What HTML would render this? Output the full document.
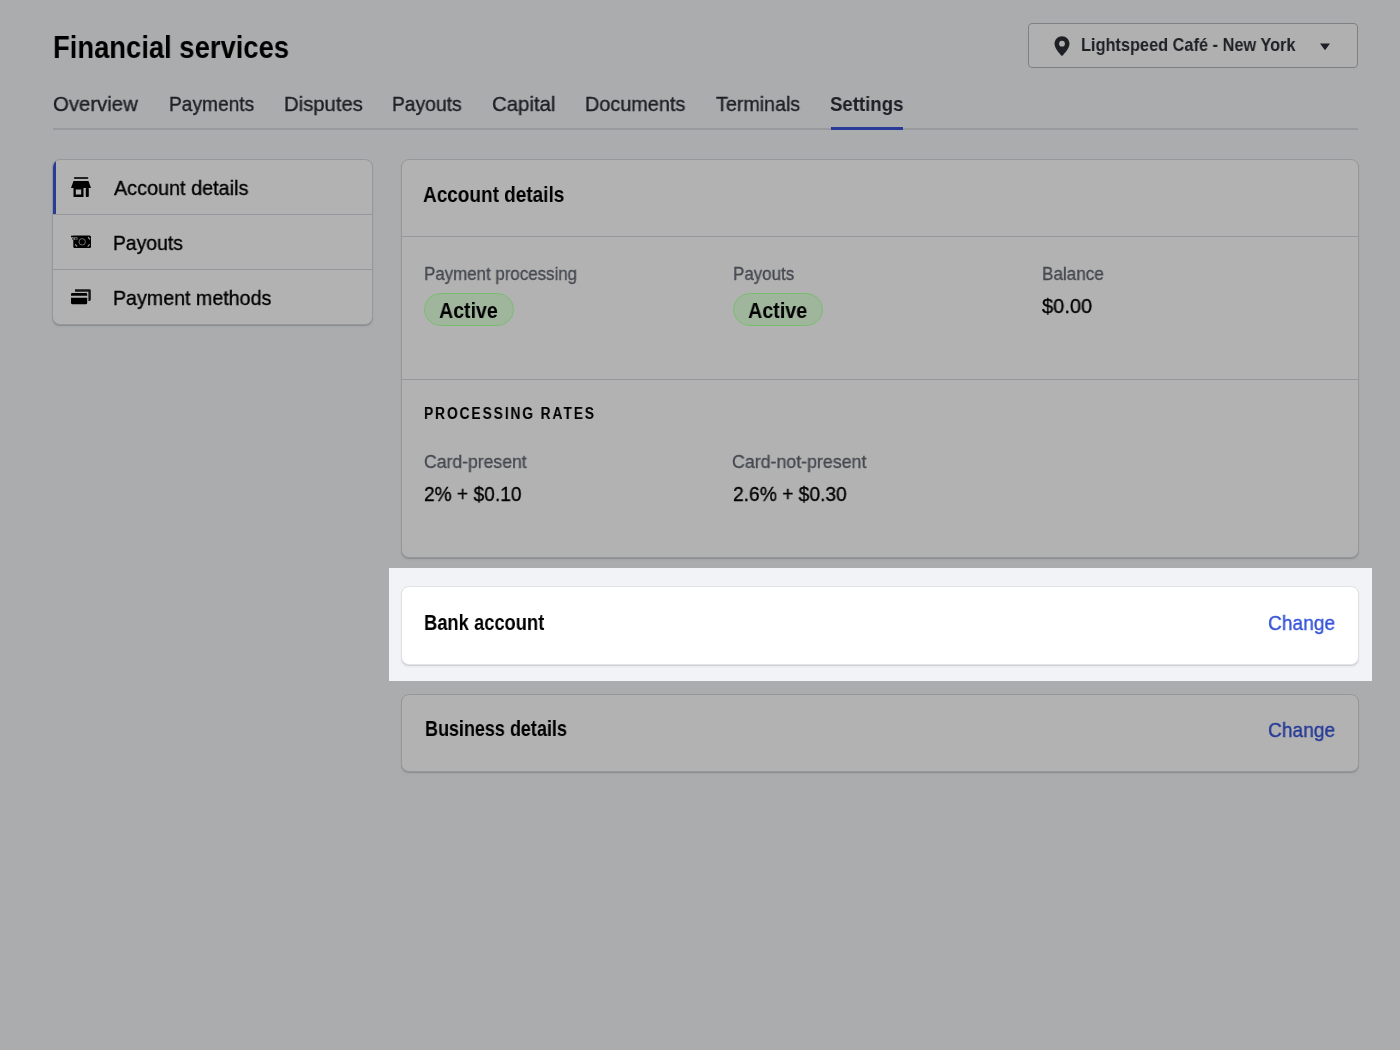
<!DOCTYPE html>
<html>
<head>
<meta charset="utf-8">
<style>
html,body{margin:0;padding:0;}
body{width:1400px;height:1050px;position:relative;overflow:hidden;background:#f5f6f8;font-family:"Liberation Sans",sans-serif;color:#000;}
.a{position:absolute;white-space:nowrap;line-height:1;will-change:transform;}
.h1{font-size:32px;font-weight:700;color:#000;}
.tab{font-size:20.8px;color:#2b2e36;-webkit-text-stroke:0.35px #2b2e36;}
.sel{font-weight:700;-webkit-text-stroke:0;}
.loc{font-size:19px;font-weight:700;color:#2b2e36;}
.val{font-size:20.8px;color:#000;-webkit-text-stroke:0.35px currentColor;}
.b20{font-size:22px;font-weight:700;color:#000;}
.lbl{font-size:18.6px;color:#636873;-webkit-text-stroke:0.3px #636873;}
.caps{font-size:16px;font-weight:700;color:#000;}
.act{font-size:22px;font-weight:700;color:#000;}
.blue{color:#3553d8;}
.card{position:absolute;background:#fff;border:1px solid #d6d9de;border-radius:8px;box-sizing:border-box;box-shadow:0 1px 0 rgba(0,0,0,.13),0 2px 3px rgba(0,0,0,.05);}
.hr{position:absolute;height:1px;background:#d5d8de;}
.badge{position:absolute;width:90px;height:33px;box-sizing:border-box;border:1px solid #78bd6e;background:#9fb59c;border-radius:17px;}
.overlay{position:absolute;left:0;top:0;width:1400px;height:1050px;background:rgba(0,0,0,.3);}
</style>
</head>
<body>
<!-- header -->
<div class="a h1" id="title" style="left:53.40px;top:31.00px;letter-spacing:0.000px;transform:scaleX(0.8559);transform-origin:0 0;">Financial services</div>

<div style="position:absolute;left:1028px;top:23px;width:330px;height:45px;box-sizing:border-box;border:1px solid #b5b8be;border-radius:4px;background:#fdfdfd;"></div>
<svg style="position:absolute;left:1052px;top:35px" width="20" height="22" viewBox="0 0 20 22">
  <path d="M10 1.2C5.8 1.2 2.5 4.6 2.5 8.8c0 5.2 7.5 12.4 7.5 12.4s7.5-7.2 7.5-12.4C17.5 4.6 14.2 1.2 10 1.2zm0 10.4a2.9 2.9 0 1 1 0-5.8 2.9 2.9 0 0 1 0 5.8z" fill="#2b2e36"/>
</svg>
<div class="a loc" id="loc" style="left:1081.40px;top:34.70px;letter-spacing:0.000px;transform:scaleX(0.8595);transform-origin:0 0;">Lightspeed Café - New York</div>

<svg style="position:absolute;left:1319px;top:42px" width="12" height="9" viewBox="0 0 12 9"><path d="M1 1.5h10L6 8.2z" fill="#2b2e36"/></svg>

<!-- tabs -->
<div class="a tab" id="t_overview" style="left:52.60px;top:94.30px;letter-spacing:0.000px;transform:scaleX(0.9781);transform-origin:0 0;">Overview</div>
<div class="a tab" id="t_payments" style="left:169.00px;top:94.30px;letter-spacing:0.000px;transform:scaleX(0.9216);transform-origin:0 0;">Payments</div>
<div class="a tab" id="t_disputes" style="left:284.00px;top:94.30px;letter-spacing:0.000px;transform:scaleX(0.9745);transform-origin:0 0;">Disputes</div>
<div class="a tab" id="t_payouts" style="left:391.80px;top:94.30px;letter-spacing:0.000px;transform:scaleX(0.9265);transform-origin:0 0;">Payouts</div>
<div class="a tab" id="t_capital" style="left:492.20px;top:94.30px;letter-spacing:0.000px;transform:scaleX(0.9803);transform-origin:0 0;">Capital</div>
<div class="a tab" id="t_documents" style="left:584.75px;top:94.30px;letter-spacing:0.000px;transform:scaleX(0.9542);transform-origin:0 0;">Documents</div>
<div class="a tab" id="t_terminals" style="left:716.25px;top:94.30px;letter-spacing:0.000px;transform:scaleX(0.9455);transform-origin:0 0;">Terminals</div>
<div class="a tab sel" id="t_settings" style="left:829.75px;top:93.90px;letter-spacing:0.000px;transform:scaleX(0.8948);transform-origin:0 0;">Settings</div>

<div style="position:absolute;left:53px;top:128px;width:1305px;height:2px;background:#dadde2;"></div>
<div style="position:absolute;left:831px;top:127px;width:72px;height:3px;background:#3a56d8;"></div>

<!-- sidebar -->
<div class="card" style="left:52px;top:159px;width:321px;height:166px;overflow:hidden;">
  <div style="position:absolute;left:0;top:0;width:3px;height:54px;background:#3a56d8;"></div>
  <div class="hr" style="left:0;top:54px;width:321px;"></div>
  <div class="hr" style="left:0;top:109px;width:321px;"></div>
</div>
<svg style="position:absolute;left:71px;top:177px" width="20" height="20" viewBox="0 0 20 20">
  <rect x="2.8" y="0" width="14.5" height="2" rx="1" fill="#000" opacity=".8"/>
  <path d="M2.5 4h15l2.5 7H0z" fill="#000"/>
  <path d="M2.5 11h10v9h-10zM4.8 12.5v5h5.4v-5z" fill="#000" fill-rule="evenodd"/>
  <rect x="14.8" y="11" width="3" height="9" rx=".8" fill="#000"/>
</svg>
<svg style="position:absolute;left:71px;top:235px" width="20" height="14" viewBox="0 0 20 14">
  <rect x="0" y="0.7" width="19" height="1.6" fill="#000"/>
  <path d="M2.3 .7h16.5a1.2 1.2 0 0 1 1.2 1.2v9.9a1.2 1.2 0 0 1-1.2 1.2H3.5a1.2 1.2 0 0 1-1.2-1.2z" fill="#000"/>
  <rect x="2.3" y="2.3" width="4.2" height="2.6" fill="#b4b4b4"/>
  <rect x="1.2" y="3.2" width="1.1" height="1.5" fill="#222"/><rect x="4" y="3.2" width="1.7" height="1.5" fill="#222"/>
  <circle cx="11.2" cy="6.8" r="3.2" fill="none" stroke="#c8c8c8" stroke-width=".8"/>
  <path d="M4.4 9.6l1.3 1.6M18.4 9.6l-1.3 1.6M17.4 2.5l1.3 1.5" stroke="#d0d0d0" stroke-width="1.2" stroke-linecap="round"/>
</svg>
<svg style="position:absolute;left:71px;top:289px" width="20" height="16" viewBox="0 0 20 16">
  <path d="M4 0.3h14.6a1.2 1.2 0 0 1 1.2 1.2v9.5l-1 1h-1.4V2.8H4z" fill="#222"/>
  <path d="M1.2 4h13.8a1.2 1.2 0 0 1 1.2 1.2V6.8H0V5.2A1.2 1.2 0 0 1 1.2 4zM0 8.8h16.2v5a1.5 1.5 0 0 1-1.5 1.5H1.5A1.5 1.5 0 0 1 0 13.8z" fill="#000"/>
</svg>
<div class="a val" id="sb_acc" style="left:114.20px;top:178.00px;letter-spacing:0.000px;transform:scaleX(0.9527);transform-origin:0 0;">Account details</div>
<div class="a val" id="sb_pay" style="left:113.20px;top:232.80px;letter-spacing:0.000px;transform:scaleX(0.9294);transform-origin:0 0;">Payouts</div>
<div class="a val" id="sb_pm" style="left:113.20px;top:287.80px;letter-spacing:0.000px;transform:scaleX(0.9444);transform-origin:0 0;">Payment methods</div>


<!-- account details card -->
<div class="card" style="left:401px;top:159px;width:958px;height:399px;">
  <div class="hr" style="left:0;top:76px;width:956px;"></div>
  <div class="hr" style="left:0;top:219px;width:956px;"></div>
</div>
<div class="a b20" id="card_title" style="left:422.50px;top:183.60px;letter-spacing:0.000px;transform:scaleX(0.8628);transform-origin:0 0;">Account details</div>

<div class="a lbl" id="l_pp" style="left:424.30px;top:265.20px;letter-spacing:0.000px;transform:scaleX(0.9085);transform-origin:0 0;">Payment processing</div>
<div class="a lbl" id="l_payouts" style="left:733.00px;top:265.20px;letter-spacing:0.000px;transform:scaleX(0.9099);transform-origin:0 0;">Payouts</div>
<div class="a lbl" id="l_balance" style="left:1041.70px;top:265.20px;letter-spacing:0.000px;transform:scaleX(0.9206);transform-origin:0 0;">Balance</div>

<div class="a val" id="bal" style="left:1042.00px;top:296.00px;letter-spacing:0.000px;transform:scaleX(0.9627);transform-origin:0 0;">$0.00</div>

<div class="a caps" id="rates" style="left:424.20px;top:406.40px;letter-spacing:2.200px;transform:scaleX(0.8621);transform-origin:0 0;">PROCESSING RATES</div>

<div class="a lbl" id="l_cp" style="left:424.00px;top:453.00px;letter-spacing:0.000px;transform:scaleX(0.9463);transform-origin:0 0;">Card-present</div>
<div class="a lbl" id="l_cnp" style="left:732.40px;top:453.00px;letter-spacing:0.000px;transform:scaleX(0.9560);transform-origin:0 0;">Card-not-present</div>
<div class="a val" id="rate1" style="left:424.00px;top:483.90px;letter-spacing:0.000px;transform:scaleX(0.9216);transform-origin:0 0;">2% + $0.10</div>
<div class="a val" id="rate2" style="left:733.10px;top:483.90px;letter-spacing:0.000px;transform:scaleX(0.9236);transform-origin:0 0;">2.6% + $0.30</div>


<!-- business details card -->
<div class="card" style="left:401px;top:694px;width:958px;height:78px;"></div>
<div class="a b20" id="biz" style="left:424.80px;top:718.30px;letter-spacing:0.000px;transform:scaleX(0.8171);transform-origin:0 0;">Business details</div>
<div class="a val blue" id="change2" style="left:1268.20px;top:719.70px;letter-spacing:0.000px;transform:scaleX(0.9214);transform-origin:0 0;">Change</div>


<!-- overlay -->
<div class="overlay"></div>

<div class="badge" style="left:424px;top:293px;"></div>
<div class="badge" style="left:733px;top:293px;"></div>
<div class="a act" id="active1" style="left:439.40px;top:300.20px;letter-spacing:0.000px;transform:scaleX(0.8901);transform-origin:0 0;">Active</div>
<div class="a act" id="active2" style="left:747.80px;top:300.20px;letter-spacing:0.000px;transform:scaleX(0.8966);transform-origin:0 0;">Active</div>

<!-- spotlight -->
<div style="position:absolute;left:389px;top:568px;width:983px;height:113px;background:#f2f3f7;"></div>
<div class="card" style="left:401px;top:586px;width:958px;height:79px;border-color:#e0e2e6;box-shadow:0 1px 0 rgba(0,0,0,.10),0 2px 3px rgba(0,0,0,.05);"></div>
<div class="a b20" id="bank" style="left:424.20px;top:612.10px;letter-spacing:0.000px;transform:scaleX(0.8336);transform-origin:0 0;">Bank account</div>
<div class="a val blue" id="change1" style="left:1268.20px;top:612.80px;letter-spacing:0.000px;transform:scaleX(0.9214);transform-origin:0 0;">Change</div>

</body>
</html>
